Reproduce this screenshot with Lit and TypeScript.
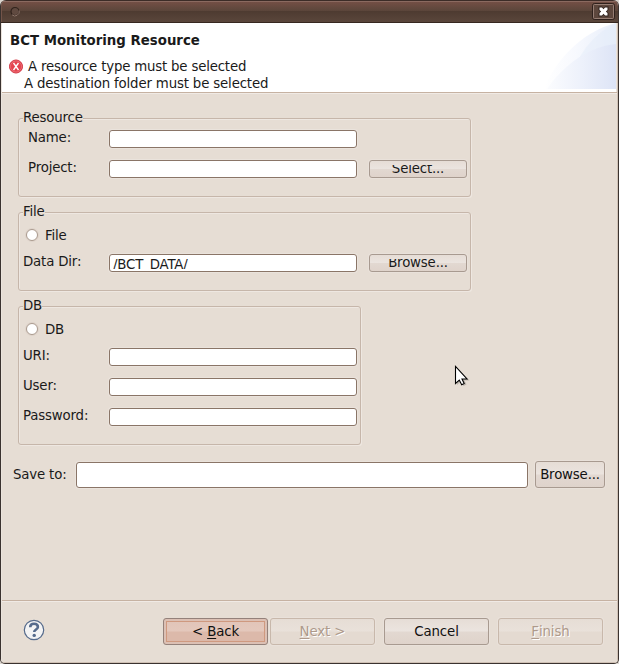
import { LitElement, html, css, nothing } from "lit";
import { customElement, property } from "lit/decorators.js";

@customElement("form-group")
class FormGroup extends LitElement {
  @property() caption = "";
  static styles = css`
    :host { display: block; box-sizing: border-box; border: 1px solid #c6b6aa; border-radius: 3px; box-shadow: inset 1px 1px 0 #eee7e1, 1px 1px 0 #eee7e1; }
    .caption { display: block; width: max-content; height: 16px; line-height: 16px; margin: -9px 0 0 4px; background: #e6ddd4; }
  `;
  render() {
    return html`<span class="caption">${this.caption}</span><slot></slot>`;
  }
}

@customElement("form-row")
class FormRow extends LitElement {
  @property() label = "";
  @property() value = "";
  @property() action = "";
  static styles = css`
    :host { display: flex; height: 18px; align-items: flex-start; }
    .label { width: 86px; line-height: 16px; white-space: nowrap; flex: none; box-sizing: border-box; padding-left: var(--indent, 0px); }
    .field { width: 248px; height: 18px; flex: none; box-sizing: border-box; border: 1px solid #8a7567; border-radius: 3px; background: #fff; box-shadow: 0 0 0 1px #eae3dc; padding: 2px 3px; }
    .value { display: block; height: 12px; overflow: hidden; line-height: 16px; }
    .button { width: 98px; height: 18px; margin-left: 12px; flex: none; box-sizing: border-box; border: 1px solid #a89a90; border-radius: 3px; padding: 4px 0; background: linear-gradient(#e6ddd6, #ebe4df 48%, #e2d8d1 52%, #dfd3cb); box-shadow: 0 0 0 1px #e9e1da; }
    .clip { display: flex; justify-content: center; align-items: flex-end; height: 9px; overflow: hidden; line-height: 16px; }
    .clip span { margin-bottom: -3px; }
  `;
  render() {
    return html`<span class="label">${this.label}</span>
      <div class="field"><span class="value">${this.value}</span></div>
      ${this.action ? html`<div class="button"><div class="clip"><span>${this.action}</span></div></div>` : nothing}`;
  }
}

@customElement("app-root")
class AppRoot extends LitElement {
  static styles = css`
    :host { display: block; width: 619px; height: 664px; overflow: hidden; background: #dcd6d0; font: 13.33px/16px "DejaVu Sans", sans-serif; color: #1a1a1a; }
    .window { position: relative; box-sizing: border-box; height: 664px; display: flex; flex-direction: column; border: 1px solid #3a322f; border-top: 0; border-radius: 6px 6px 5px 5px; background: #e6ddd4; overflow: hidden; }
    .titlebar { height: 23px; flex: none; box-sizing: border-box; display: flex; align-items: center; justify-content: space-between; border-top: 1px solid #3c2c27; border-bottom: 1px solid #36271f; box-shadow: inset 0 1px 0 #8b6a60, inset 1px 0 0 #735449; background: linear-gradient(#765046, #5c463b 45%, #4e3b31 50%, #5a463b); padding: 0 3px 0 8px; }
    .titlebar svg { display: block; }
    .inner { flex: 1; display: flex; flex-direction: column; border: 1px solid #cfc0b4; border-top: 0; border-left-color: #ebe4dd; }
    .header { height: 69px; flex: none; box-sizing: border-box; position: relative; background: #fff; border-right: 1px solid #ebe4dd; padding: 10px 0 0 8px; }
    .swoosh { position: absolute; right: 0; top: 0; display: block; }
    h1 { margin: 0; font: bold 13.33px/16px "DejaVu Sans", sans-serif; }
    .message { display: flex; margin-top: 10px; letter-spacing: -0.19px; }
    .message svg { margin: 0 4px 0 -1px; flex: none; }
    .second { padding-left: 14px; margin-top: 1px; letter-spacing: -0.16px; }
    .rule { flex: none; height: 1px; background: #c6b2a2; border-bottom: 1px solid #f0eae5; }
    .body { flex: 1; padding-left: 16px; letter-spacing: -0.17px; }
    .group { width: 453px; height: 79px; margin-top: 15px; }
    .group.first { margin-top: 24px; }
    .group.db { width: 343px; height: 139px; }
    .group form-row { margin-left: 4px; }
    .resource form-row { --indent: 5px; }
    .gap4 { margin-top: 4px; }
    .gap12 { margin-top: 12px; }
    .radio { display: flex; align-items: flex-start; height: 16px; margin: 8px 0 0 7px; gap: 7px; }
    .radio i { width: 12px; height: 12px; margin-top: 1px; box-sizing: border-box; border: 1px solid #aa9a8e; border-radius: 50%; background: #fff; box-shadow: 0 0 0 1px #ded3ca; }
    .afterradio { margin-top: 10px; }
    .save { display: flex; align-items: center; margin: 16px 0 0 -5px; height: 27px; }
    .save span { width: 63px; flex: none; white-space: nowrap; }
    .save .path { width: 452px; height: 26px; box-sizing: border-box; border: 1px solid #8a7567; border-radius: 3px; background: #fff; box-shadow: 0 0 0 1px #eae3dc; margin-right: 7px; }
    .btn { height: 27px; width: 105px; flex: none; box-sizing: border-box; border: 1px solid #a89a90; border-radius: 3px; display: flex; justify-content: center; align-items: center; white-space: pre; background: linear-gradient(#e6ddd6, #ebe4df 48%, #e2d8d1 52%, #dfd3cb); box-shadow: 0 0 0 1px #e9e1da; color: #111; }
    .btn.small { width: 70px; }
    .btn u { text-underline-offset: 2px; text-decoration-thickness: 1px; }
    .btn.primary { border-color: #94817a; background: linear-gradient(#e1c4b8, #e4c8bc 48%, #dcb9aa 52%, #dcb9aa); box-shadow: inset 0 0 0 1px #dcc0b4, inset 0 0 0 2px #dcc0b4, inset 0 0 0 3px #cf997f; }
    .btn.disabled { color: #ae9a8b; border-color: #c8b8ab; text-shadow: 1px 1px 0 #fff; background: linear-gradient(#e6ddd5, #e9e1da 48%, #e4dad1 52%, #e4dad1); }
    .footer { height: 60px; flex: none; box-sizing: border-box; display: flex; padding: 16px 0 0 21px; letter-spacing: -0.1px; }
    .help { margin: 1px 118px 0 0; flex: none; }
    .back { margin-right: 2px; }
    .next, .cancel { margin-right: 9px; }
    .cursor { position: absolute; left: 453px; top: 365px; }
  `;

  render() {
    return html`
      <div class="window">
        <div class="titlebar">
          <svg width="12" height="12" viewBox="0 0 12 12"><circle cx="6" cy="5.5" r="4" fill="#604a40" stroke="#30221c" stroke-width="1.2"/><path d="M3 8.8A4.4 4.4 0 0 0 10.2 4.5" fill="none" stroke="#987f74" stroke-width=".9"/></svg>
          <svg width="23" height="17" viewBox="0 0 23 17"><rect x=".5" y=".5" width="22" height="16" rx="2" fill="#5d473d" stroke="#2f211c"/><rect x="1.5" y="1.5" width="20" height="14" rx="1" fill="none" stroke="#957d73"/><path d="M6.500 3.500H10l1.500 1.500L13 3.500h3.500V7L15 8.500l1.500 1.500v3.500H13L11.500 12 10 13.500H6.500V10L8 8.500 6.500 7z" fill="#2f211c"/><path d="M7.500 4.500H10l1.500 1.800L13 4.500h2.500V7l-1.700 1.500 1.700 1.500v2.500H13l-1.500-1.800-1.500 1.800H7.500V10l1.700-1.500L7.500 7z" fill="#fff"/></svg>
        </div>
        <div class="inner">
          <div class="header">
            <svg class="swoosh" width="72" height="66" viewBox="0 0 72 66">
              <defs>
                <linearGradient id="a" x1="0" x2="1"><stop offset="0" stop-color="#fff"/><stop offset=".45" stop-color="#f7f9fe"/><stop offset="1" stop-color="#e8eefa"/></linearGradient>
                <linearGradient id="b" x1="0" x2="1"><stop offset="0" stop-color="#fbfcfe"/><stop offset=".5" stop-color="#edf1fb"/><stop offset="1" stop-color="#dde4f6"/></linearGradient>
              </defs>
              <path d="M0 66C10 40 36 9 72 0V66z" fill="url(#a)"/>
              <path d="M24 66C29 41 43 14 72 0V66z" fill="#e3eaf9" opacity=".45"/>
              <path d="M3 66C19 43 43 24 72 21V66z" fill="url(#b)"/>
            </svg>
            <h1>BCT Monitoring Resource</h1>
            <div class="message">
              <svg width="15" height="15" viewBox="0 0 15 15"><circle cx="7" cy="7.500" r="6.500" fill="#e5444f" stroke="#cf2f3c"/><circle cx="7" cy="7.500" r="5.600" fill="none" stroke="#f08a91" stroke-width=".6"/><path d="M4.500 4l5 7M9.500 4l-5 7" stroke="#fff" stroke-width="1.300"/></svg>
              <span>A resource type must be selected</span>
            </div>
            <div class="second">A destination folder must be selected</div>
          </div>
          <div class="rule"></div>
          <div class="body">
            <form-group class="group first resource" caption="Resource">
              <form-row class="gap4" label="Name:"></form-row>
              <form-row class="gap12" label="Project:" action="Select..."></form-row>
            </form-group>
            <form-group class="group" caption="File">
              <div class="radio"><i></i><span>File</span></div>
              <form-row class="afterradio" label="Data Dir:" value="/BCT_DATA/" action="Browse..."></form-row>
            </form-group>
            <form-group class="group db" caption="DB">
              <div class="radio"><i></i><span>DB</span></div>
              <form-row class="afterradio" label="URI:"></form-row>
              <form-row class="gap12" label="User:"></form-row>
              <form-row class="gap12" label="Password:"></form-row>
            </form-group>
            <div class="save"><span>Save to:</span><div class="path"></div><div class="btn small">Browse...</div></div>
          </div>
          <div class="rule"></div>
          <div class="footer">
            <svg class="help" width="22" height="22" viewBox="0 0 22 22"><circle cx="11" cy="11" r="9.7" fill="#f3f3f4" stroke="#566b8c" stroke-width="1.2"/><path d="M7.200 8.300C7.200 5.800 8.800 4.700 11 4.700s3.900 1.200 3.900 3.200c0 2.500-3.700 2.600-3.700 5.100" fill="none" stroke="#566b8c" stroke-width="2.600"/><circle cx="11.200" cy="16.400" r="1.700" fill="#566b8c"/></svg>
            <div class="btn primary back">&lt; <u>B</u>ack</div>
            <div class="btn disabled next"><u>N</u>ext &gt;</div>
            <div class="btn cancel">Cancel</div>
            <div class="btn disabled"><u>F</u>inish</div>
          </div>
        </div>
        <svg class="cursor" width="16" height="22" viewBox="0 0 16 22"><path d="M3 3v17l4-3.5 2.500 4.500 3-1.500-2-4h5z" fill="#000" opacity=".18"/><path d="M1.500 1.500v17l3.800-3.400 2.400 4.600 2.500-1.200-2.200-4.500h5z" fill="#fff" stroke="#000" stroke-width="1.100"/></svg>
      </div>`;
  }
}
